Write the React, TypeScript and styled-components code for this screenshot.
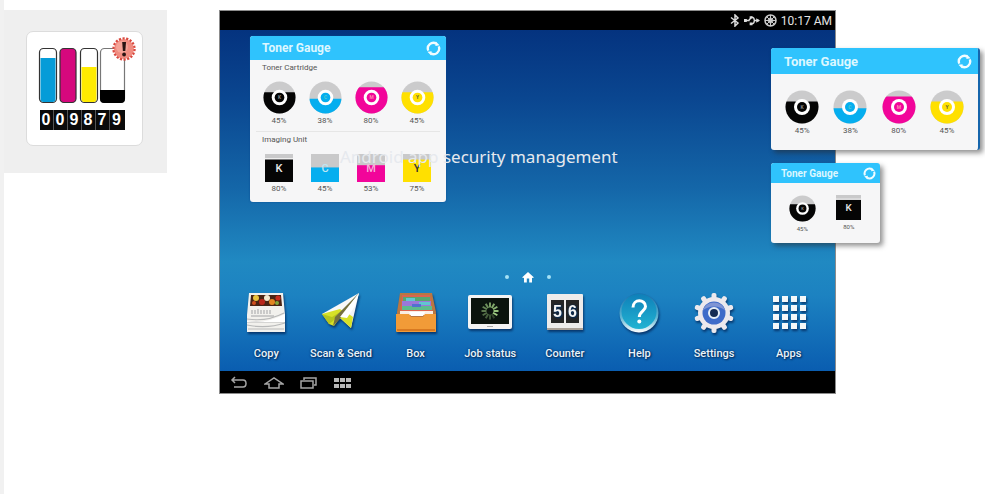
import React, { useId } from "react";
import styled, { createGlobalStyle, css } from "styled-components";

const GlobalStyle = createGlobalStyle`
  * { box-sizing: border-box; }
  body { margin: 0; background: #fff; font-family: Roboto, "Noto Sans", sans-serif; }
  button { border: 0; padding: 0; margin: 0; background: none; font: inherit; color: inherit; cursor: pointer; }
  svg { display: block; }
  h1, h2, h3, p, figure, ul { margin: 0; padding: 0; list-style: none; font-weight: 400; }
`;

const Page = styled.main`
  display: flex;
  align-items: flex-start;
  min-height: 100vh;
  padding: 10px 149px 0 0;
  border-left: 4px solid #f1f1f1;
  overflow: hidden;
`;

const AppPreview = styled.section`
  flex: none;
  display: grid;
  place-items: center;
  width: 163px;
  height: 163px;
  margin-right: 52px;
  padding-bottom: 6px;
  padding-right: 2px;
  background: #efefef;
`;

const AppTile = styled.div`
  display: flex;
  flex-direction: column;
  align-items: center;
  width: 117px;
  padding: 4px 0 15px 7px;
  background: #fff;
  border: 1px solid #dcdcdc;
  border-radius: 7px;
`;

const Odometer = styled.p`
  display: flex;
  margin-top: 5px;
  margin-right: 12px;
`;

const Digit = styled.span`
  width: 14px;
  height: 20px;
  background: #0b0b0b;
  border-right: 1px solid #555;
  color: #fff;
  font: 700 16px/20px "Liberation Sans", sans-serif;
  text-align: center;
  &:last-child { border-right-color: #0b0b0b; width: 15px; }
`;

const Tablet = styled.section`
  position: relative;
  flex: 1;
  min-width: 600px;
  border: 1px solid #8c8c8c;
`;

const StatusBar = styled.header`
  display: flex;
  align-items: center;
  justify-content: flex-end;
  gap: 4px;
  height: 19px;
  padding-right: 3px;
  background: #000;
  color: #e4e4e4;
  font-size: 12px;
  svg { flex: none; }
`;

const Desktop = styled.div`
  display: flex;
  flex-direction: column;
  padding: 6px 9px 10px;
  background: linear-gradient(#04337f 0%, #0a4690 20%, #1466a8 46%, #2089c2 68%, #1c82c1 78%, #0a5db0 100%);
`;

const headerSizes = {
  medium: css`height: 24px; padding: 0 5px 0 12px; font-size: 12px;`,
  large: css`height: 26px; padding: 0 6px 0 13px; font-size: 13px;`,
  small: css`height: 20px; padding: 0 4px 0 10px; font-size: 10px;`,
};
type Size = keyof typeof headerSizes;

const bodyPadding = { medium: "0 6px 7px", large: "16px 7px 13px", small: "12px 8px 8px" };
const cardWidth = { medium: 196, large: 209, small: 109 };

const Card = styled.article<{ $size: Size }>`
  width: ${(p) => cardWidth[p.$size]}px;
  background: #f6f6f7;
  border-radius: 3px;
  overflow: hidden;
  box-shadow: ${(p) => (p.$size === "medium" ? "0 0 2px #0a4a92" : "3px 3px 5px rgba(40, 40, 40, 0.5)")};
  ${(p) => p.$size === "medium" && "margin-left: 21px;"}
  ${(p) => p.$size === "large" && "border-right: 2px solid #1565ac;"}
`;

const CardHeader = styled.header<{ $size: Size }>`
  display: flex;
  align-items: center;
  justify-content: space-between;
  background: #2fc3fd;
  color: #dcf7ff;
  h2 { font-size: inherit; font-weight: 700; }
  ${(p) => headerSizes[p.$size]}
`;

const CardBody = styled.div<{ $size: Size }>`
  padding: ${(p) => bodyPadding[p.$size]};
`;

const GroupTitle = styled.h3`
  padding-left: 6px;
  color: #555;
  font-size: 8px;
  line-height: 16px;
`;

const Gauges = styled.ul<{ $ruled?: boolean }>`
  display: grid;
  grid-auto-flow: column;
  grid-auto-columns: 1fr;
  ${(p) => p.$ruled && "padding: 5px 0 4px; border-bottom: 1px solid #e6e6e6;"}
`;

const GaugeItem = styled.li<{ $small?: boolean }>`
  display: flex;
  flex-direction: column;
  align-items: center;
  gap: 1px;
  color: #555;
  font-size: ${(p) => (p.$small ? 6 : 8)}px;
  line-height: 12px;
`;

const UnitSlot = styled.div`
  padding-top: 6px;
`;

const Pager = styled.nav`
  display: flex;
  align-items: center;
  justify-content: center;
  gap: 13px;
  height: 14px;
  margin-top: 68px;
`;

const PageDot = styled.button`
  width: 4px;
  height: 4px;
  border-radius: 2px;
  background: #a5e2f5;
`;

const Dock = styled.nav`
  display: grid;
  grid-template-columns: repeat(8, 1fr);
  margin-top: 8px;
`;

const DockButton = styled.button`
  display: flex;
  flex-direction: column;
  align-items: center;
  gap: 13px;
  color: #e9f3fa;
  font-size: 11px;
  font-weight: 500;
  line-height: 14px;
  white-space: nowrap;
  text-shadow: 1px 1px 2px #032c5c, 0 0 2px #032c5c;
  svg { filter: drop-shadow(1px 2px 1px rgba(0, 25, 70, 0.65)); }
`;

const NavBar = styled.nav`
  display: flex;
  align-items: center;
  gap: 15px;
  height: 22px;
  padding: 2px 0 0 9px;
  background: #000;
`;

const Caption = styled.h1`
  position: absolute;
  top: 134px;
  left: 120px;
  color: #e6e9ee;
  font: 400 17px/24px "Noto Sans", sans-serif;
  white-space: nowrap;
`;

const FloatingCards = styled.aside`
  position: absolute;
  top: 37px;
  left: calc(100% - 64px);
  display: flex;
  flex-direction: column;
  gap: 13px;
`;

interface Toner {
  letter: string;
  color: string;
  ink: string;
  percent: number;
  empty: number;
}

const cartridges: Toner[] = [
  { letter: "K", color: "#050505", ink: "#888", percent: 45, empty: 0.34 },
  { letter: "C", color: "#05aeef", ink: "#5cc", percent: 38, empty: 0.54 },
  { letter: "M", color: "#f2059a", ink: "#f8a", percent: 80, empty: 0.19 },
  { letter: "Y", color: "#ffe000", ink: "#663", percent: 45, empty: 0.34 },
];

const units: Toner[] = [
  { letter: "K", color: "#050505", ink: "#e8e8e8", percent: 80, empty: 0.2 },
  { letter: "C", color: "#05aeef", ink: "#bfe6f2", percent: 45, empty: 0.48 },
  { letter: "M", color: "#f2059a", ink: "#f5b5da", percent: 53, empty: 0.4 },
  { letter: "Y", color: "#ffe000", ink: "#333", percent: 75, empty: 0.2 },
];

function Disc({ toner, size }: { toner: Toner; size: number }) {
  const id = useId();
  return (
    <svg width={size} height={size} viewBox="0 0 34 34" aria-hidden="true">
      <clipPath id={id}>
        <rect y={34 * toner.empty} width="34" height="34" />
      </clipPath>
      <circle cx="17" cy="17" r="16.5" fill="#cbcbcc" />
      <circle cx="17" cy="17" r="16.5" fill={toner.color} clipPath={`url(#${id})`} />
      <circle cx="17" cy="17" r="8" fill="#fff" />
      <circle cx="17" cy="17" r="5" fill={toner.color} />
      <text x="17" y="19" fontSize="5" fontWeight="700" textAnchor="middle" fill={toner.ink}>{toner.letter}</text>
    </svg>
  );
}

function Unit({ toner, size }: { toner: Toner; size: number }) {
  return (
    <svg width={size} height={size} viewBox="0 0 28 28" aria-hidden="true">
      <rect width="28" height="28" fill="#c9c9ca" />
      {toner.letter === "K" && <rect y="4" width="28" height="1" fill="#eee" />}
      <rect y={28 * toner.empty} width="28" height={28 * (1 - toner.empty)} fill={toner.color} />
      <text x="14" y="18" fontSize="11" fontWeight="500" textAnchor="middle" fill={toner.ink}>{toner.letter}</text>
    </svg>
  );
}

function RefreshButton({ size }: { size: number }) {
  return (
    <button type="button" aria-label="Refresh">
      <svg width={size} height={size} viewBox="0 0 16 16" fill="none" stroke="#f1fcff" strokeWidth="2.5">
        <path d="M2.400 10.200A6 6 0 0 1 11 2.800" />
        <path d="M13.600 5.800A6 6 0 0 1 5 13.200" />
        <path d="M10.500 0.500 14.500 4.600 10 5.200z M5.500 15.500 1.500 11.400 6 10.800z" fill="#f1fcff" stroke="none" />
      </svg>
    </button>
  );
}

function TonerCard({ size, children }: { size: Size; children: React.ReactNode }) {
  return (
    <Card $size={size}>
      <CardHeader $size={size}>
        <h2>Toner Gauge</h2>
        <RefreshButton size={size === "small" ? 13 : 15} />
      </CardHeader>
      <CardBody $size={size}>{children}</CardBody>
    </Card>
  );
}

function TonerTubes() {
  return (
    <svg width="100" height="69" viewBox="0 0 100 69" aria-hidden="true">
      <g stroke="#333" strokeWidth="1.2">
        <rect x="1.5" y="12.5" width="17" height="54" rx="4" fill="#fff" />
        <path d="M2.5 22H17.5V63a3 3 0 0 1-3 3h-9a3 3 0 0 1-3-3z" fill="#059cd8" stroke="none" />
        <rect x="22" y="12.5" width="16" height="54" rx="4" fill="#d6087d" />
        <rect x="42.500" y="12.500" width="17" height="54" rx="4" fill="#fff" />
        <path d="M43.500 31H58.500V63a3 3 0 0 1-3 3h-9a3 3 0 0 1-3-3z" fill="#ffeb00" stroke="none" />
        <rect x="62.500" y="12.500" width="24" height="54" rx="4" fill="#fff" stroke="#777" />
        <path d="M62 54H87V63a4 4 0 0 1-4 4H66a4 4 0 0 1-4-4z" fill="#000" stroke="none" />
      </g>
      <circle cx="86" cy="13" r="10" fill="#f08c80" />
      <circle cx="86" cy="13" r="10.600" fill="none" stroke="#d9483e" strokeWidth="2.200" strokeDasharray="2.200 1.500" />
      <circle cx="84" cy="11" r="6" fill="#f8b3a6" opacity="0.600" />
      <path d="M84.200 6h3.800l-0.700 9h-2.400z" fill="#281412" />
      <circle cx="86.100" cy="18.500" r="1.900" fill="#281412" />
    </svg>
  );
}

function CopyIcon() {
  return (
    <svg width="42" height="42" viewBox="0 0 42 42">
      <path d="M4 1h34l2 22v17H2V23z" fill="#f2f1ed" />
      <path d="M6 3h30l1 11H5z" fill="#4a2414" />
      <circle cx="11" cy="6" r="3" fill="#e9c23d" /><circle cx="17" cy="10" r="3" fill="#b9271b" />
      <circle cx="22" cy="6" r="3" fill="#f5ead0" /><circle cx="27" cy="10" r="3" fill="#e38522" />
      <circle cx="33" cy="6" r="2.600" fill="#c72d1e" /><circle cx="32" cy="11" r="2" fill="#83a83a" />
      <circle cx="9" cy="11" r="2" fill="#d14f1d" />
      <path d="M7 18v4m3-4v4m3-5v5m3-4v4m3-4v4m3-4v4m3-4v4M6 24h23" stroke="#bdbdbd" strokeWidth="1.500" />
      <path d="M2 27q20 3 37-6M2 30h38M2 33q20 4 38-2M3 37q20 0 36 0" fill="none" stroke="#b8b9b9" strokeWidth="1.200" />
      <path d="M2 29q20 3 38-7v8H2z" fill="#fff" />
    </svg>
  );
}

function PlaneIcon() {
  return (
    <svg width="42" height="42" viewBox="0 0 42 42">
      <path d="M39 1 2 22l8 4 17-10z" fill="#f8f8f8" />
      <path d="M2 22 20 17l4 3-10 14-5-2z" fill="#d7e127" />
      <path d="M2 22l10 3 8-5-7 9-4 3z" fill="#b6c51e" />
      <path d="M39 1 19 25l12 11z" fill="#f3f3f7" />
      <path d="M19 25l12 11 2-11-7-5z" fill="#d7e127" />
      <path d="M39 1 15 25l-2 9 6-6z" fill="#75703f" />
      <path d="M39 1 20 25l7 1 8-12z" fill="#fff" />
    </svg>
  );
}

function BoxIcon() {
  return (
    <svg width="42" height="42" viewBox="0 0 42 42">
      <path d="M5 1h32l4 19v20H2V20z" fill="#b87742" />
      <path d="M7 3h28l3 20H5z" fill="#db6450" />
      <path d="M8 5h27v4H8z" fill="#58a66f" /><path d="M7 9h29v5H7z" fill="#9a78da" />
      <path d="M11 6h9v3h-9zM24 10h11v3H24z" fill="#60c6d0" />
      <path d="M7 14h30v4H7z" fill="#5ebb8d" /><path d="M17 12h9v3h-9z" fill="#5370d1" />
      <path d="M5 19h33v4H5z" fill="#f9eee3" />
      <path d="M1 22h13l2 3h12l2-3h11v17q0 1-1 1H2q-1 0-1-1z" fill="#f19b38" />
      <path d="M14 20h16l-2 4H16z" fill="#fff" />
      <path d="M2 38h38" stroke="#d87921" strokeWidth="2" />
    </svg>
  );
}

function JobIcon() {
  return (
    <svg width="46" height="42" viewBox="0 0 46 42">
      <rect x="1" y="3" width="44" height="34" rx="2" fill="#f4f4f4" />
      <rect x="4" y="6" width="38" height="26" fill="#0b140e" />
      <path d="M20 34.500h6" stroke="#aaa" />
      <g stroke="#a9da8b" strokeWidth="2">
        {Array.from({ length: 12 }, (_, i) => (
          <path key={i} d="M23 10.500v5" opacity={0.25 + ((i + 7) % 12) / 16} transform={`rotate(${i * 30} 23 19)`} />
        ))}
      </g>
    </svg>
  );
}

function CounterIcon() {
  return (
    <svg width="42" height="42" viewBox="0 0 42 42">
      <rect x="3" y="2" width="36" height="36" rx="1" fill="#eeeceb" />
      <path d="M3 37h36" stroke="#aaa197" strokeWidth="2" />
      <path d="M7 8h13v23H7zM22 8h13v23H22z" fill="#252525" />
      <g fill="#f4f4f4" fontFamily="Liberation Sans, sans-serif" fontSize="16" fontWeight="700" textAnchor="middle">
        <text x="13.500" y="25">5</text><text x="28.500" y="25">6</text>
      </g>
    </svg>
  );
}

function HelpIcon() {
  return (
    <svg width="42" height="42" viewBox="0 0 42 42">
      <defs>
        <linearGradient id="help-rim" x2="0" y2="1"><stop stopColor="#1770ae" /><stop offset="0.600" stopColor="#5bb4d2" /><stop offset="1" stopColor="#fff" /></linearGradient>
        <linearGradient id="help-face" x2="0" y2="1"><stop stopColor="#0f80b9" /><stop offset="1" stopColor="#22b3d2" /></linearGradient>
      </defs>
      <circle cx="21" cy="21" r="19.500" fill="url(#help-rim)" />
      <circle cx="21" cy="19.500" r="17.500" fill="url(#help-face)" />
      <path d="M15 15.500C15 6.500 27.500 7 27.500 14.500C27.500 19 21.300 19.500 21.300 25" fill="none" stroke="#fff" strokeWidth="3" />
      <circle cx="21.300" cy="29.500" r="2" fill="#fff" />
    </svg>
  );
}

function SettingsIcon() {
  return (
    <svg width="42" height="42" viewBox="0 0 42 42">
      <g fill="#ece9ed">
        {Array.from({ length: 10 }, (_, i) => (
          <rect key={i} x="18.500" y="1" width="5" height="8" rx="2" transform={`rotate(${i * 36} 21 21)`} />
        ))}
        <circle cx="21" cy="21" r="16" />
      </g>
      <circle cx="21" cy="21" r="11.500" fill="#3e6bc9" />
      <path d="M9.500 19a12 12 0 0 1 23 0c-5-6-18-6-23 0" fill="#7f95d4" />
      <circle cx="21" cy="21" r="5" fill="#152c54" stroke="#e8f0f7" strokeWidth="2" />
    </svg>
  );
}

function AppsIcon() {
  return (
    <svg width="42" height="42" viewBox="0 0 42 42" fill="#f4f8f9">
      {Array.from({ length: 16 }, (_, i) => (
        <rect key={i} x={5 + (i % 4) * 9} y={4 + Math.floor(i / 4) * 9} width="6" height="6" />
      ))}
    </svg>
  );
}

const dockItems = [
  { label: "Copy", Icon: CopyIcon },
  { label: "Scan & Send", Icon: PlaneIcon },
  { label: "Box", Icon: BoxIcon },
  { label: "Job status", Icon: JobIcon },
  { label: "Counter", Icon: CounterIcon },
  { label: "Help", Icon: HelpIcon },
  { label: "Settings", Icon: SettingsIcon },
  { label: "Apps", Icon: AppsIcon },
];

const navItems = [
  { label: "Back", path: "M3 4h11q3 0 3 3.500t-3 3.500H5M6 1 3 4l3 3" },
  { label: "Home", path: "M1 8 10 2l9 6h-4v4H5V8z" },
  { label: "Recent", path: "M2 5h12v7H2zM5 4V2h12v7h-2" },
];

function Discs({ size, ruled }: { size: number; ruled?: boolean }) {
  return (
    <Gauges $ruled={ruled}>
      {cartridges.map((t) => (
        <GaugeItem key={t.letter}><Disc toner={t} size={size} />{t.percent}%</GaugeItem>
      ))}
    </Gauges>
  );
}

export default function App() {
  return (
    <>
      <GlobalStyle />
      <Page>
        <AppPreview>
          <AppTile>
            <TonerTubes />
            <Odometer>{[..."009879"].map((d, i) => <Digit key={i}>{d}</Digit>)}</Odometer>
          </AppTile>
        </AppPreview>
        <Tablet>
          <StatusBar>
            <svg width="10" height="13" viewBox="0 0 10 13" fill="none" stroke="#ddd" strokeWidth="1.500"><path d="M1 3.500 8 9l-3 3V1l3 3-7 5.500" /></svg>
            <svg width="16" height="13" viewBox="0 0 17 13" fill="none" stroke="#ddd" strokeWidth="1.400"><path d="M1 6.500h5M11 6.500h5M5 6.500 8 3q3 0 3 3.500T8 10" /><path d="M13 4l4 2.500-4 2.500zM6 2h3v2.500H6zM6 8.500h3v3H6zM0 5h3v3H0z" fill="#ddd" stroke="none" /></svg>
            <svg width="13" height="13" viewBox="0 0 13 13" fill="none" stroke="#ccc"><circle cx="6.500" cy="6.500" r="5.500" strokeWidth="1.500" /><circle cx="6.500" cy="6.500" r="2.500" /><path d="M6.500 1v11M1 6.500h11M3 3l7 7M10 3l-7 7" /></svg>
            <time>10:17 AM</time>
          </StatusBar>
          <Desktop>
            <TonerCard size="medium">
              <GroupTitle>Toner Cartridge</GroupTitle>
              <Discs size={33} ruled />
              <GroupTitle>Imaging Unit</GroupTitle>
              <UnitSlot>
                <Gauges>
                  {units.map((t) => (
                    <GaugeItem key={t.letter}><Unit toner={t} size={28} />{t.percent}%</GaugeItem>
                  ))}
                </Gauges>
              </UnitSlot>
            </TonerCard>
            <Pager aria-label="Home screens">
              <PageDot type="button" aria-label="Previous screen" />
              <button type="button" aria-label="Home screen">
                <svg width="12" height="11" viewBox="0 0 12 11"><path d="M6 0 0 5.500 2 6v4.500h2.800v-4h2.400v4H10V6l2-.500z" fill="#fff" /></svg>
              </button>
              <PageDot type="button" aria-label="Next screen" />
            </Pager>
            <Dock aria-label="Applications">
              {dockItems.map(({ label, Icon }) => (
                <DockButton type="button" key={label}><Icon />{label}</DockButton>
              ))}
            </Dock>
          </Desktop>
          <NavBar aria-label="System">
            {navItems.map((n) => (
              <button type="button" key={n.label} aria-label={n.label}>
                <svg width="20" height="14" viewBox="0 0 20 14" fill="none" stroke="#a6a6a6" strokeWidth="1.500"><path d={n.path} /></svg>
              </button>
            ))}
            <button type="button" aria-label="All apps">
              <svg width="18" height="12" viewBox="0 0 18 12" fill="#b9b9b9"><path d="M0 1h5v4H0zM6 1h5v4H6zM12 1h5v4h-5zM0 7h5v4H0zM6 7h5v4H6zM12 7h5v4h-5z" /></svg>
            </button>
          </NavBar>
          <Caption>Android app security management</Caption>
          <FloatingCards>
            <TonerCard size="large"><Discs size={34} /></TonerCard>
            <TonerCard size="small">
              <Gauges>
                <GaugeItem $small><Disc toner={cartridges[0]} size={27} />45%</GaugeItem>
                <GaugeItem $small><Unit toner={units[0]} size={25} />80%</GaugeItem>
              </Gauges>
            </TonerCard>
          </FloatingCards>
        </Tablet>
      </Page>
    </>
  );
}
